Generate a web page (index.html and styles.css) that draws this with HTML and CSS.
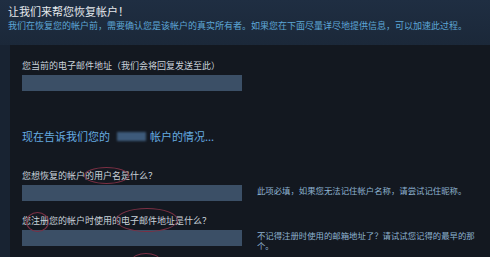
FILE: index.html
```html
<!DOCTYPE html>
<html lang="zh-CN">
<head>
<meta charset="utf-8">
<link rel="stylesheet" href="styles.css">
</head>
<body>
<div class="page">
  <header class="header">
    <h1 class="title">让我们来帮您恢复帐户！</h1>
    <p class="intro">我们在恢复您的帐户前，需要确认您是该帐户的真实所有者。如果您在下面尽量详尽地提供信息，可以加速此过程。</p>
  </header>
  <main class="panel">
    <section class="field">
      <label class="label">您当前的电子邮件地址（我们会将回复发送至此）</label>
      <div class="row"><div class="input"></div></div>
    </section>
    <h2 class="section-title">现在告诉我们您的<span class="blur"></span>帐户的情况...</h2>
    <section class="field">
      <label class="label">您想恢复的帐户的用户名是什么？</label>
      <div class="row"><div class="input"></div><p class="hint">此项必填，如果您无法记住帐户名称，请尝试记住昵称。</p></div>
    </section>
    <section class="field second">
      <label class="label">您注册您的帐户时使用的电子邮件地址是什么？</label>
      <div class="row"><div class="input"></div><p class="hint">不记得注册时使用的邮箱地址了？请试试您记得的最早的那个。</p></div>
    </section>
  </main>
  <span class="mark m1"></span>
  <span class="mark m2"></span>
  <span class="mark m3"></span>
  <span class="mark m4"></span>
</div>
</body>
</html>
```
FILE: styles.css
```css
html, body {
  margin: 0;
  padding: 0;
  background: #1a2534;
  font-family: "Noto Sans CJK SC", "Noto Sans", sans-serif;
  overflow: hidden;
}
.page {
  position: relative;
  width: 490px;
  height: 257px;
  background: #182332;
}
.header {
  height: 45px;
  padding: 4px 8px 0 8px;
  box-sizing: border-box;
  background: linear-gradient(180deg, #1f2e42 0%, #1b2839 100%);
}
.title {
  margin: 0;
  font-size: 11px;
  line-height: 15px;
  font-weight: normal;
  color: #e4e8ec;
}
.intro {
  margin: 1px 0 0 0;
  font-size: 9px;
  line-height: 12px;
  color: #5ea7d6;
  white-space: nowrap;
}
.panel {
  margin-left: 10px;
  height: 212px;
  padding: 15px 12px 0 12px;
  box-sizing: border-box;
  background: #131820;
  display: flex;
  flex-direction: column;
}
.field {
  display: flex;
  flex-direction: column;
  gap: 3px;
}
.label {
  font-size: 9px;
  line-height: 12px;
  color: #c9d2da;
  white-space: nowrap;
}
.row {
  display: flex;
  align-items: flex-start;
  gap: 15px;
}
.input {
  width: 220px;
  height: 16px;
  flex: none;
  background: #3b4f66;
}
.hint {
  margin: 0;
  width: 222px;
  font-size: 8.4px;
  line-height: 10px;
  color: #8fb3d1;
}
.section-title {
  margin: 38px 0 26px 0;
  font-size: 11px;
  line-height: 15px;
  font-weight: normal;
  color: #66ace0;
  display: flex;
  align-items: center;
}
.blur {
  display: inline-block;
  width: 29px;
  height: 9px;
  margin: 0 4px 0 7px;
  background: #3d5a7a;
  filter: blur(0.8px);
}
.second {
  margin-top: 14px;
}
.mark {
  position: absolute;
  border: 1px solid #7c3044;
  border-radius: 50%;
  box-sizing: border-box;
}
.m1 { left: 84px; top: 167px; width: 45px; height: 17px; }
.m2 { left: 26px; top: 212px; width: 23px; height: 20px; }
.m3 { left: 116px; top: 208px; width: 62px; height: 24px; }
.m4 { left: 132px; top: 253px; width: 28px; height: 14px; }
```
